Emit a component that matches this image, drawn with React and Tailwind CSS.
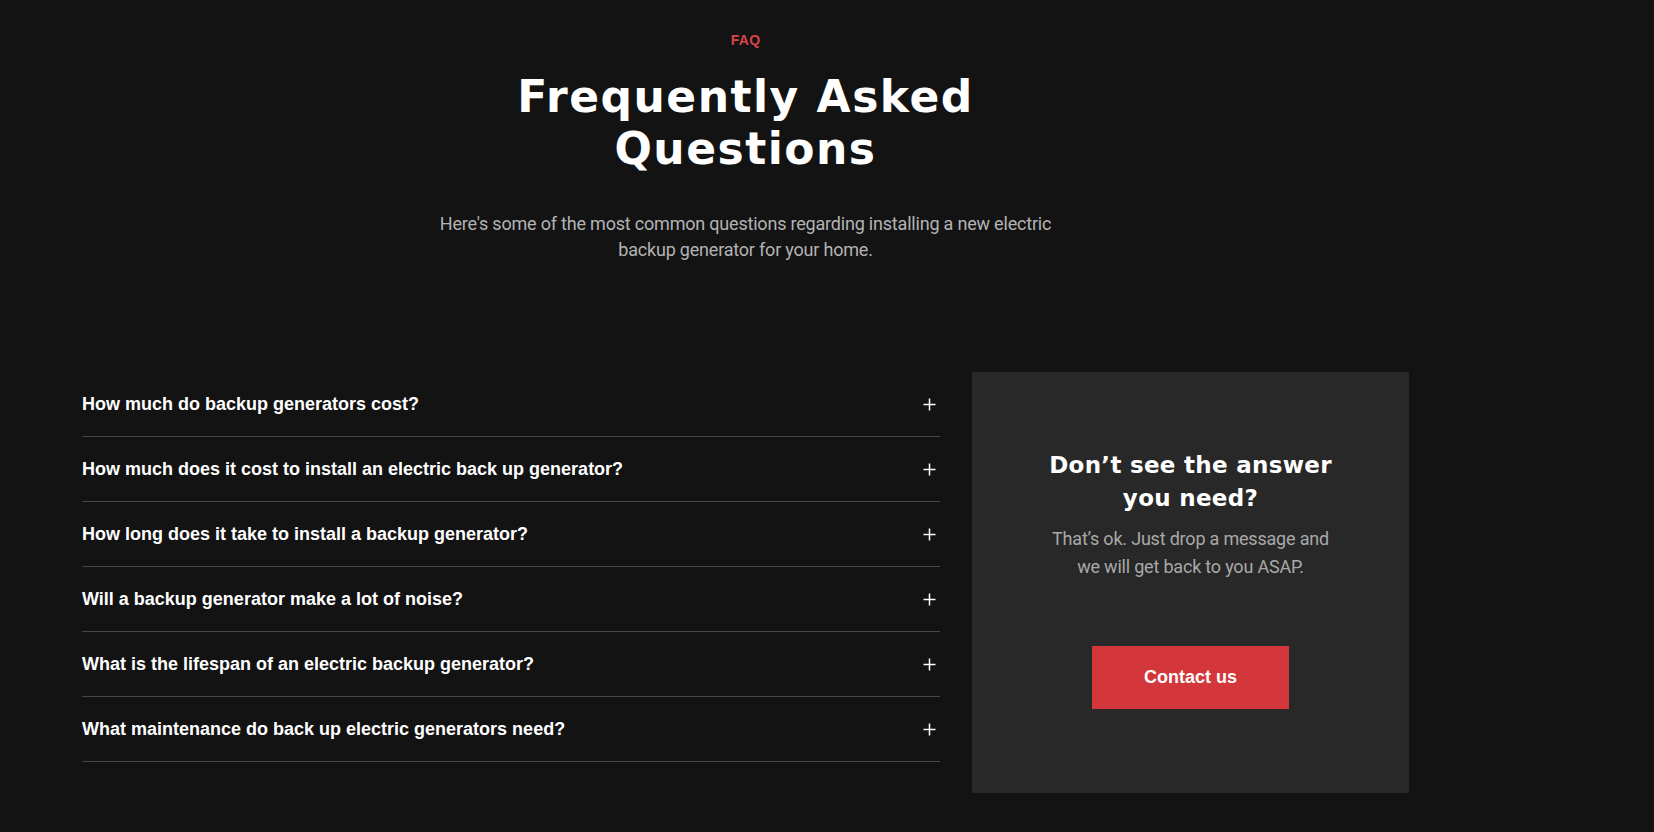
import React, { useState } from "react";

const questions = [
  "How much do backup generators cost?",
  "How much does it cost to install an electric back up generator?",
  "How long does it take to install a backup generator?",
  "Will a backup generator make a lot of noise?",
  "What is the lifespan of an electric backup generator?",
  "What maintenance do back up electric generators need?",
];

const PlusIcon = () => (
  <svg width="13" height="13" viewBox="0 0 13 13" fill="none" stroke="currentColor" strokeWidth="1.5">
    <path d="M6.5 0.5v12M0.5 6.5h12" />
  </svg>
);

const FaqRow = ({ question, open, onToggle }) => (
  <button
    onClick={onToggle}
    className="w-full h-[65px] flex items-center justify-between border-b border-[#474747] text-left"
  >
    <span className="font-['Liberation_Sans',Arial,sans-serif] font-bold text-[18px] text-white">{question}</span>
    <span className={`text-white mr-[4px] transition-transform ${open ? "rotate-45" : ""}`}>
      <PlusIcon />
    </span>
  </button>
);

export default function App() {
  const [openIndex, setOpenIndex] = useState(null);

  return (
    <div className="min-h-[832px] bg-[#131313] font-['Roboto',sans-serif]">
      <div className="ml-[82px] w-[1327px] pt-[33px]">
        {/* Header */}
        <div className="flex flex-col items-center text-center">
          <p className="font-['Liberation_Sans',Arial,sans-serif] font-bold text-[14px] leading-[14px] tracking-[0.3px] text-[#d8434a]">FAQ</p>
          <h2 className="mt-[24px] max-w-[480px] font-['DejaVu_Sans',sans-serif] font-bold text-[44px] leading-[52px] tracking-[1.5px] text-white">
            Frequently Asked Questions
          </h2>
          <p className="mt-[36px] max-w-[630px] text-[18px] leading-[26px] text-[#b3b3b3] tracking-[-0.2px]">
            Here's some of the most common questions regarding installing a new electric backup generator for your home.
          </p>
        </div>

        {/* FAQ list + contact card */}
        <div className="mt-[109px] flex gap-[32px] items-start">
          <div className="w-[858px]">
            {questions.map((q, i) => (
              <FaqRow
                key={q}
                question={q}
                open={openIndex === i}
                onToggle={() => setOpenIndex(openIndex === i ? null : i)}
              />
            ))}
          </div>

          <div className="w-[437px] h-[421px] bg-[#282828] flex flex-col items-center pt-[77px] text-center">
            <h3 className="max-w-[300px] font-['DejaVu_Sans',sans-serif] font-bold text-[23px] leading-[33px] tracking-[0.3px] text-white">
              Don’t see the answer you need?
            </h3>
            <p className="mt-[10px] max-w-[290px] text-[18px] leading-[28px] text-[#a9a9a9] tracking-[-0.2px]">
              That’s ok. Just drop a message and we will get back to you ASAP.
            </p>
            <button className="mt-[65px] w-[197px] h-[63px] bg-[#d3363b] font-['Liberation_Sans',Arial,sans-serif] font-bold text-[18px] text-white">
              Contact us
            </button>
          </div>
        </div>
      </div>
    </div>
  );
}
